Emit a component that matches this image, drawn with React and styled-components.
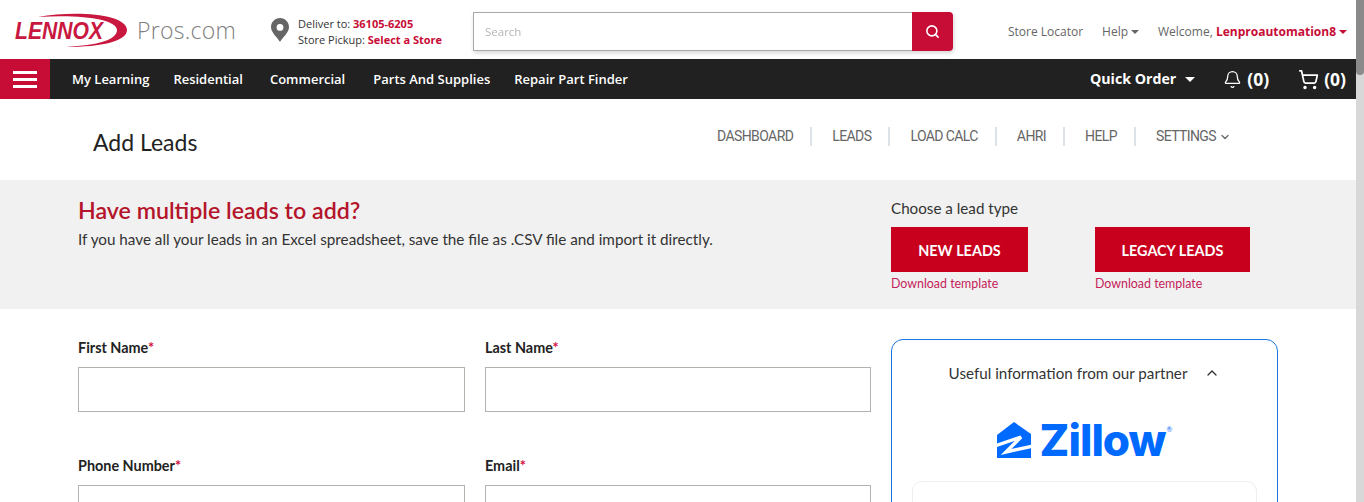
import styled, { createGlobalStyle } from "styled-components";
import { Search, Bell, ShoppingCart, ChevronUp, ChevronDown } from "lucide-react";

const GlobalStyle = createGlobalStyle`
  html { overflow: hidden; }
  body { margin: 0; background: #fff; color: #222; font-family: "Open Sans", sans-serif; }
  * { box-sizing: border-box; }
`;

const BODY_FONT = `"Lato", "Liberation Sans", sans-serif`;
const RED = "#c70c36";

const Page = styled.div`
  display: flex;
  height: 100vh;
  overflow: hidden;
`;
const Content = styled.div`
  flex: 1;
  min-width: 0;
`;
const ScrollRail = styled.div`
  width: 8px;
  background: #d8d8d8;
`;
const ScrollThumb = styled.div`
  height: 75px;
  background: #8a8a8a;
  border-radius: 0 0 4px 4px;
`;

const TopBar = styled.header`
  height: 59px;
  display: flex;
  align-items: center;
  padding: 0 9px 0 14px;
  font-size: 11px;
`;
const LogoBox = styled.div`
  display: flex;
  align-items: center;
  width: 257px;
`;
const ProsText = styled.span`
  margin-left: 9px;
  font-size: 23px;
  font-weight: 300;
  color: #808080;
  letter-spacing: 0.3px;
`;
const DeliverBox = styled.div`
  display: flex;
  align-items: center;
  width: 202px;
  gap: 9px;
  line-height: 16px;
  color: #333;
`;
const DeliverText = styled.div`
  padding-top: 4px;
`;
const RedStrong = styled.b`
  color: ${RED};
  font-weight: 700;
`;
const SearchBox = styled.div`
  display: flex;
  width: 480px;
  height: 39px;
  margin-top: 4px;
  filter: drop-shadow(1px 2px 2px rgba(0, 0, 0, 0.16));
`;
const SearchInput = styled.div`
  flex: 1;
  border: 1px solid #a9a9a9;
  border-right: 0;
  background: #fff;
  padding: 0 11px;
  display: flex;
  align-items: center;
  font-size: 11.5px;
  color: #b5b5b5;
`;
const SearchButton = styled.div`
  width: 41px;
  background: ${RED};
  border-radius: 0 4px 4px 0;
  display: flex;
  align-items: center;
  justify-content: center;
  color: #fff;
`;
const TopLinks = styled.div`
  margin-left: auto;
  display: flex;
  align-items: center;
  gap: 19px;
  color: #666;
  font-size: 12px;
  padding-top: 3px;
`;
const Caret = styled.i`
  display: inline-block;
  margin-left: ${(p) => p.$gap || 3}px;
  vertical-align: 2px;
  border-left: ${(p) => p.$size || 4}px solid transparent;
  border-right: ${(p) => p.$size || 4}px solid transparent;
  border-top: ${(p) => p.$size || 4}px solid ${(p) => p.$color || "#666"};
`;

const NavBar = styled.nav`
  height: 40px;
  background: #212121;
  display: flex;
  align-items: center;
  color: #fff;
`;
const Burger = styled.div`
  width: 50px;
  height: 40px;
  background: ${RED};
  display: flex;
  flex-direction: column;
  justify-content: center;
  gap: 4px;
  padding: 0 13px;
`;
const BurgerLine = styled.span`
  height: 3px;
  background: #fff;
`;
const NavLinks = styled.div`
  display: flex;
  margin-left: 22px;
  font-size: 13px;
  font-weight: 600;
`;
const NavLink = styled.span`
  margin-left: ${(p) => p.$gap}px;
`;
const NavRight = styled.div`
  margin-left: auto;
  display: flex;
  align-items: center;
  padding-right: 10px;
  font-weight: 700;
`;
const QuickOrder = styled.span`
  font-size: 14.2px;
  margin-right: 28px;
  padding-bottom: 2px;
`;
const Counter = styled.span`
  display: flex;
  align-items: center;
  gap: 5px;
  font-size: 17.5px;
  margin-left: ${(p) => p.$left || 0}px;
`;

const TitleRow = styled.div`
  height: 81px;
  display: flex;
  padding: 28px 125px 0 93px;
  font-family: ${BODY_FONT};
`;
const PageTitle = styled.h1`
  margin: 0;
  font-size: 23px;
  line-height: 30px;
  font-weight: 400;
  color: #222;
`;
const Tabs = styled.div`
  margin-left: auto;
  display: flex;
  height: 19px;
  color: #666;
  font-family: "Roboto", sans-serif;
  font-size: 14px;
  letter-spacing: -0.6px;
  line-height: 19px;
`;
const Tab = styled.span`
  display: flex;
  align-items: center;
  gap: 3px;
  padding: 0 17px 0 20px;
  border-right: ${(p) => (p.$last ? "0" : "2px solid #dde1e8")};
  &:first-child { padding-left: 0; }
  &:last-child { padding-right: 0; }
`;

const Banner = styled.section`
  height: 129px;
  background: #f1f1f1;
  display: grid;
  grid-template-columns: 813px 1fr;
  padding: 0 0 0 78px;
  font-family: ${BODY_FONT};
`;
const BannerText = styled.div`
  padding-top: 15px;
`;
const BannerTitle = styled.h2`
  margin: 0;
  font-size: 23.2px;
  line-height: 30px;
  font-weight: 600;
  color: #b5152b;
`;
const BannerCopy = styled.p`
  margin: 4px 0 0;
  font-size: 15.25px;
  line-height: 20px;
  color: #333;
`;
const LeadType = styled.div`
  padding-top: 18px;
`;
const LeadLabel = styled.div`
  font-size: 15.2px;
  line-height: 20px;
  color: #333;
  margin-bottom: 9px;
`;
const LeadOptions = styled.div`
  display: flex;
  gap: 67px;
`;
const LeadButton = styled.div`
  width: ${(p) => p.$width}px;
  height: 45px;
  padding-top: 1px;
  background: #c8001e;
  color: #fff;
  display: flex;
  align-items: center;
  justify-content: center;
  font-size: 14.4px;
  font-weight: 700;
`;
const TemplateLink = styled.div`
  margin-top: 4px;
  font-size: 12.4px;
  line-height: 16px;
  color: #c4215a;
`;

const FormArea = styled.main`
  display: grid;
  grid-template-columns: 813px 387px;
  padding: 30px 0 0 78px;
  font-family: ${BODY_FONT};
  align-items: start;
`;
const FieldGrid = styled.div`
  display: grid;
  grid-template-columns: 387px 386px;
  column-gap: 20px;
  row-gap: 45px;
`;
const FieldLabel = styled.label`
  display: block;
  font-size: 14.4px;
  line-height: 18px;
  font-weight: 700;
  color: #222;
  margin-bottom: 10px;
`;
const Star = styled.span`
  color: #d3113e;
`;
const TextBox = styled.input`
  display: block;
  width: 100%;
  height: 45px;
  border: 1px solid #b5b1ac;
  background: #fff;
`;

const PartnerPanel = styled.aside`
  border: 1px solid #1976e0;
  border-radius: 12px;
  padding: 0 20px;
  height: 600px;
`;
const PartnerHead = styled.div`
  height: 66px;
  display: flex;
  align-items: center;
  justify-content: center;
  gap: 17px;
  font-size: 15.2px;
  color: #333;
`;
const ZillowRow = styled.div`
  display: flex;
  justify-content: center;
  align-items: center;
  gap: 9px;
  margin-top: 15px;
  height: 38px;
`;
const ZillowName = styled.span`
  font-family: "Inter", sans-serif;
  font-weight: 800;
  font-size: 44px;
  letter-spacing: -1px;
  color: #006aff;
  line-height: 38px;
`;
const Registered = styled.sup`
  font-size: 7px;
  color: #006aff;
  align-self: flex-start;
  margin: 4px 0 0 -8px;
`;
const PartnerCard = styled.div`
  margin-top: 22px;
  height: 300px;
  border: 1px solid #eee;
  border-radius: 10px;
`;

const LennoxLogo = () => (
  <svg width="114" height="36" viewBox="0 0 114 36">
    <path
      d="M24 5 C62 -2 113 2 113 18 C113 29 88 35 52 35 C84 33 103 28 103 18 C103 7 66 2 24 5 Z"
      fill="#c8183f"
    />
    <text
      x="1"
      y="27"
      fontFamily="Liberation Sans"
      fontWeight="700"
      fontStyle="italic"
      fontSize="23"
      fill="#c8183f"
      textLength="88"
      lengthAdjust="spacingAndGlyphs"
    >
      LENNOX
    </text>
  </svg>
);

const ZillowMark = () => (
  <svg width="34" height="36" viewBox="0 0 34 36">
    <path d="M17 0 L34 12 V36 H0 V13 Z" fill="#006aff" />
    <path d="M-2 24 L24 15 L9 30 L36 24" fill="none" stroke="#fff" strokeWidth="3.4" />
  </svg>
);

const PinIcon = () => (
  <svg width="18" height="24" viewBox="0 0 18 24">
    <path
      fillRule="evenodd"
      d="M9 0 C14 0 18 4 18 9 C18 15 11 20 9 24 C7 20 0 15 0 9 C0 4 4 0 9 0 Z M9 6 A3.4 3.4 0 1 0 9 12.8 A3.4 3.4 0 1 0 9 6 Z"
      fill="#666"
    />
  </svg>
);

const navItems = [
  { label: "My Learning", gap: 0 },
  { label: "Residential", gap: 24 },
  { label: "Commercial", gap: 27 },
  { label: "Parts And Supplies", gap: 28 },
  { label: "Repair Part Finder", gap: 24 },
];
const tabs = ["DASHBOARD", "LEADS", "LOAD CALC", "AHRI", "HELP"];
const fields = ["First Name", "Last Name", "Phone Number", "Email"];

const App = () => (
  <Page>
    <GlobalStyle />
    <Content>
      <TopBar>
        <LogoBox>
          <LennoxLogo />
          <ProsText>Pros.com</ProsText>
        </LogoBox>
        <DeliverBox>
          <PinIcon />
          <DeliverText>
            Deliver to: <RedStrong>36105-6205</RedStrong>
            <br />
            Store Pickup: <RedStrong>Select a Store</RedStrong>
          </DeliverText>
        </DeliverBox>
        <SearchBox>
          <SearchInput>Search</SearchInput>
          <SearchButton>
            <Search size={15} strokeWidth={2.5} />
          </SearchButton>
        </SearchBox>
        <TopLinks>
          <span>Store Locator</span>
          <span>
            Help
            <Caret />
          </span>
          <span>
            Welcome, <RedStrong>Lenproautomation8</RedStrong>
            <Caret $color={RED} />
          </span>
        </TopLinks>
      </TopBar>
      <NavBar>
        <Burger>
          <BurgerLine />
          <BurgerLine />
          <BurgerLine />
        </Burger>
        <NavLinks>
          {navItems.map((item) => (
            <NavLink key={item.label} $gap={item.gap}>
              {item.label}
            </NavLink>
          ))}
        </NavLinks>
        <NavRight>
          <QuickOrder>
            Quick Order
            <Caret $color="#fff" $size={5} $gap={9} />
          </QuickOrder>
          <Counter>
            <Bell size={19} strokeWidth={1.6} />
            (0)
          </Counter>
          <Counter $left={29}>
            <ShoppingCart size={21} strokeWidth={2} />
            (0)
          </Counter>
        </NavRight>
      </NavBar>
      <TitleRow>
        <PageTitle>Add Leads</PageTitle>
        <Tabs>
          {tabs.map((tab) => (
            <Tab key={tab}>{tab}</Tab>
          ))}
          <Tab $last>
            SETTINGS
            <ChevronDown size={12} strokeWidth={2.5} />
          </Tab>
        </Tabs>
      </TitleRow>
      <Banner>
        <BannerText>
          <BannerTitle>Have multiple leads to add?</BannerTitle>
          <BannerCopy>
            If you have all your leads in an Excel spreadsheet, save the file as .CSV file and import it directly.
          </BannerCopy>
        </BannerText>
        <LeadType>
          <LeadLabel>Choose a lead type</LeadLabel>
          <LeadOptions>
            <div>
              <LeadButton $width={137}>NEW LEADS</LeadButton>
              <TemplateLink>Download template</TemplateLink>
            </div>
            <div>
              <LeadButton $width={155}>LEGACY LEADS</LeadButton>
              <TemplateLink>Download template</TemplateLink>
            </div>
          </LeadOptions>
        </LeadType>
      </Banner>
      <FormArea>
        <FieldGrid>
          {fields.map((field) => (
            <div key={field}>
              <FieldLabel>
                {field}
                <Star>*</Star>
              </FieldLabel>
              <TextBox />
            </div>
          ))}
        </FieldGrid>
        <PartnerPanel>
          <PartnerHead>
            Useful information from our partner
            <ChevronUp size={16} strokeWidth={2} />
          </PartnerHead>
          <ZillowRow>
            <ZillowMark />
            <ZillowName>Zillow</ZillowName>
            <Registered>®</Registered>
          </ZillowRow>
          <PartnerCard />
        </PartnerPanel>
      </FormArea>
    </Content>
    <ScrollRail>
      <ScrollThumb />
    </ScrollRail>
  </Page>
);

export default App;
